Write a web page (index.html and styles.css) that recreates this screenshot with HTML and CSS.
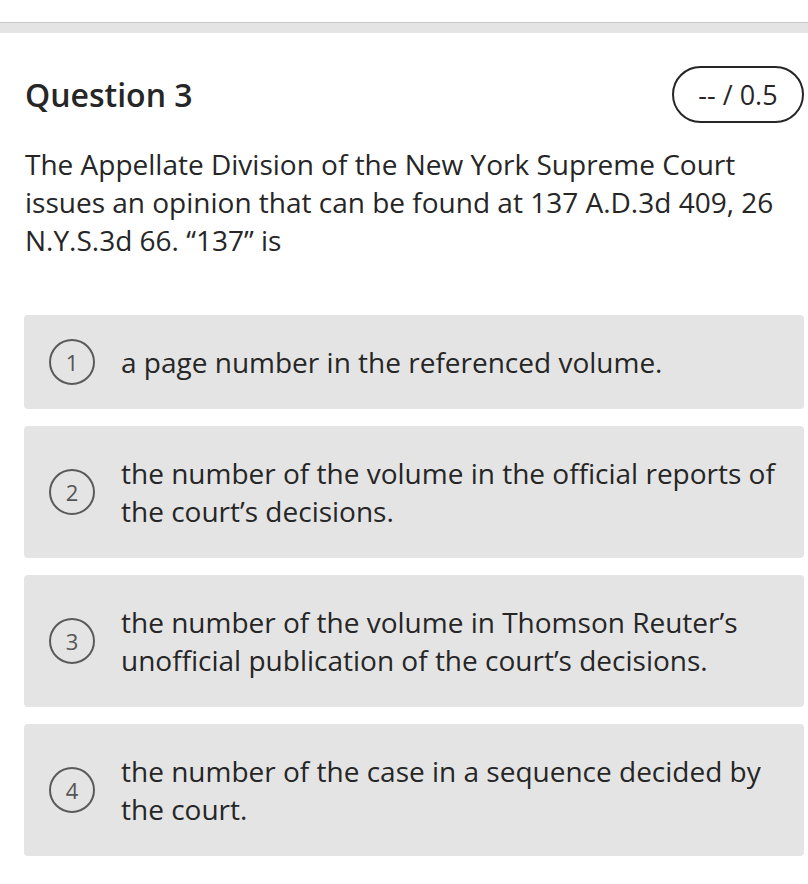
FILE: index.html
```html
<!DOCTYPE html>
<html>
<head>
<meta charset="utf-8">
<link rel="stylesheet" href="styles.css">
</head>
<body>
<div class="topbar"></div>
<main class="content">
  <div class="header">
    <h1 class="title">Question 3</h1>
    <div class="badge">-- / 0.5</div>
  </div>
  <p class="question">The Appellate Division of the New York Supreme Court issues an opinion that can be found at 137 A.D.3d 409, 26 N.Y.S.3d 66. “137” is</p>
  <ul class="options">
    <li class="option"><span class="num">1</span><span class="text">a page number in the referenced volume.</span></li>
    <li class="option"><span class="num">2</span><span class="text">the number of the volume in the official reports of the court’s decisions.</span></li>
    <li class="option"><span class="num">3</span><span class="text">the number of the volume in Thomson Reuter’s unofficial publication of the court’s decisions.</span></li>
    <li class="option"><span class="num">4</span><span class="text">the number of the case in a sequence decided by the court.</span></li>
  </ul>
</main>
</body>
</html>
```
FILE: styles.css
```css
html, body {
  margin: 0;
  padding: 0;
  background: #fff;
}
body {
  font-family: "Open Sans", "Liberation Sans", sans-serif;
  color: #262626;
}
.topbar {
  height: 10px;
  margin-top: 22px;
  border-top: 1px solid #c9c9c9;
  background: #e4e4e4;
}
.content {
  padding: 0 4px 0 24px;
}
.header {
  display: flex;
  justify-content: space-between;
  align-items: center;
  margin-top: 33px;
}
.title {
  margin: 0 0 0 1px;
  font-size: 32px;
  font-weight: 600;
  line-height: 57px;
}
.badge {
  box-sizing: border-box;
  width: 132px;
  height: 57px;
  border: 2px solid #262626;
  border-radius: 29px;
  font-size: 27px;
  display: flex;
  align-items: center;
  justify-content: center;
}
.question {
  margin: 22px 0 0 1px;
  font-size: 28px;
  line-height: 38px;
}
.options {
  list-style: none;
  margin: 56px 0 0;
  padding: 0;
  display: flex;
  flex-direction: column;
  gap: 17px;
}
.option {
  background: #e4e4e4;
  border-radius: 4px;
  padding: 24px 24px 24px 25px;
  display: flex;
  align-items: center;
  gap: 26px;
}
.num {
  flex: none;
  box-sizing: border-box;
  width: 46px;
  height: 46px;
  border: 2px solid #5a5a5a;
  border-radius: 50%;
  color: #555;
  font-size: 22px;
  display: flex;
  align-items: center;
  justify-content: center;
}
.text {
  padding: 4px 0;
  font-size: 28px;
  line-height: 38px;
}
```
